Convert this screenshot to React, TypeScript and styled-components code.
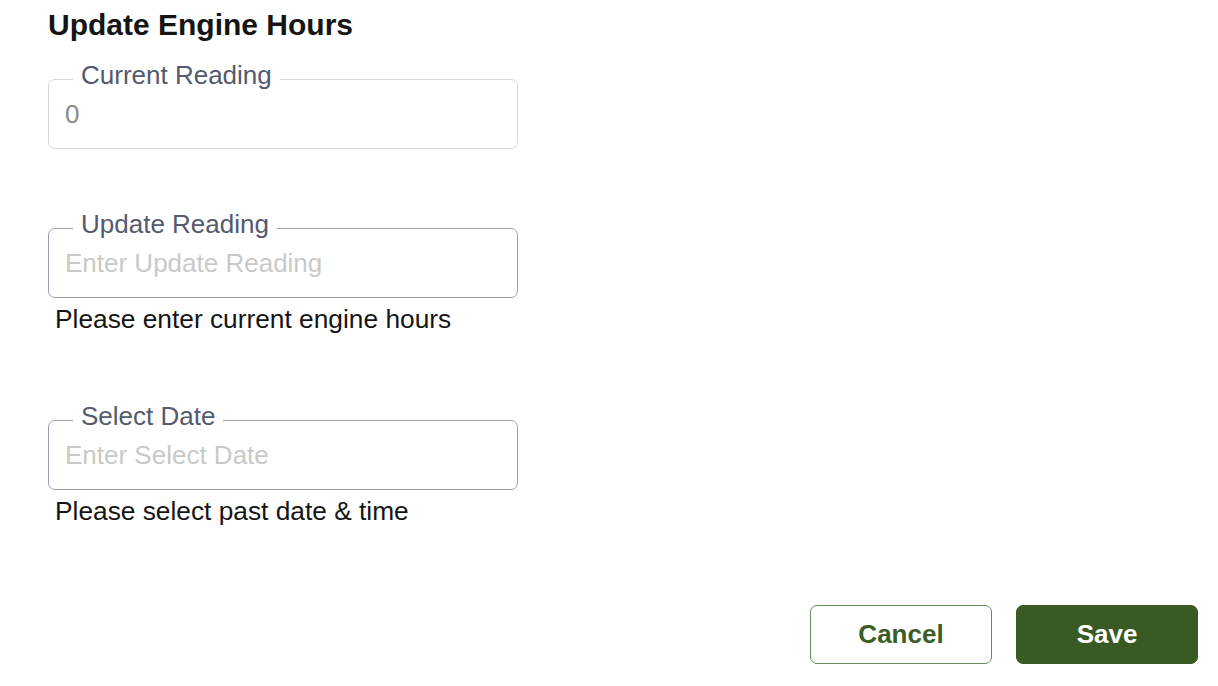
import styled, { createGlobalStyle } from 'styled-components';

const GlobalStyle = createGlobalStyle`
  html, body {
    margin: 0;
    padding: 0;
    background: #ffffff;
    font-family: "Liberation Sans", Arial, Helvetica, sans-serif;
  }
  * { box-sizing: border-box; }
`;

type FieldProps = {
  label: string;
  placeholder?: string;
  value?: string;
  helper?: string;
  muted?: boolean;
};

const Field = ({ label, placeholder, value, helper, muted }: FieldProps) => {
  return (
    <S.Group>
      <S.Outline $muted={muted}>
        <S.Legend>{label}</S.Legend>
        <S.Input placeholder={placeholder} defaultValue={value} $muted={muted} readOnly={muted} />
      </S.Outline>
      {helper && <S.Helper>{helper}</S.Helper>}
    </S.Group>
  );
};

export default function App() {
  return (
    <>
      <GlobalStyle />
      <S.Page>
        <S.Title>Update Engine Hours</S.Title>
        <S.Form>
          <Field label="Current Reading" value="0" muted />
          <Field
            label="Update Reading"
            placeholder="Enter Update Reading"
            helper="Please enter current engine hours"
          />
          <Field
            label="Select Date"
            placeholder="Enter Select Date"
            helper="Please select past date & time"
          />
        </S.Form>
        <S.Actions>
          <S.Button>Cancel</S.Button>
          <S.Button $primary>Save</S.Button>
        </S.Actions>
      </S.Page>
    </>
  );
}

namespace S {
  export const Page = styled.div`
    width: 1218px;
    height: 686px;
    padding: 7px 20px 0 48px;
    display: flex;
    flex-direction: column;
  `;

  export const Title = styled.h1`
    margin: 0;
    font-size: 30px;
    line-height: 36px;
    font-weight: 700;
    color: #151515;
  `;

  export const Form = styled.div`
    margin-top: 19px;
    display: flex;
    flex-direction: column;
    gap: 62px;
    width: 470px;
  `;

  export const Group = styled.div`
    display: flex;
    flex-direction: column;
  `;

  export const Outline = styled.fieldset<{ $muted?: boolean }>`
    margin: 0;
    padding: 0 16px 17px;
    border: 1.5px solid ${(p) => (p.$muted ? '#d5d7dd' : '#9c9fb5')};
    border-radius: 7px;
    min-width: 0;
  `;

  export const Legend = styled.legend`
    margin-left: 8px;
    padding: 0 8px 9px;
    font-size: 26px;
    line-height: 26px;
    color: #535a6e;
  `;

  export const Input = styled.input<{ $muted?: boolean }>`
    display: block;
    width: 100%;
    height: 34px;
    margin: 0;
    padding: 0;
    border: none;
    outline: none;
    background: transparent;
    font-family: inherit;
    font-size: 26px;
    line-height: 34px;
    color: ${(p) => (p.$muted ? '#8a8a8a' : '#222222')};

    &::placeholder {
      color: #c9c9c9;
    }
  `;

  export const Helper = styled.div`
    margin: 6px 0 7px 7px;
    font-size: 26.3px;
    line-height: 30px;
    color: #151515;
  `;

  export const Actions = styled.div`
    margin-top: 72px;
    display: flex;
    justify-content: flex-end;
    gap: 24px;
  `;

  export const Button = styled.button<{ $primary?: boolean }>`
    width: 182px;
    height: 59px;
    border-radius: 7px;
    font-family: inherit;
    font-size: 26px;
    font-weight: 700;
    cursor: pointer;
    border: 1.5px solid ${(p) => (p.$primary ? '#3a5a24' : '#6b8a5c')};
    background: ${(p) => (p.$primary ? '#3a5a24' : '#ffffff')};
    color: ${(p) => (p.$primary ? '#ffffff' : '#3a5e27')};
  `;
}
